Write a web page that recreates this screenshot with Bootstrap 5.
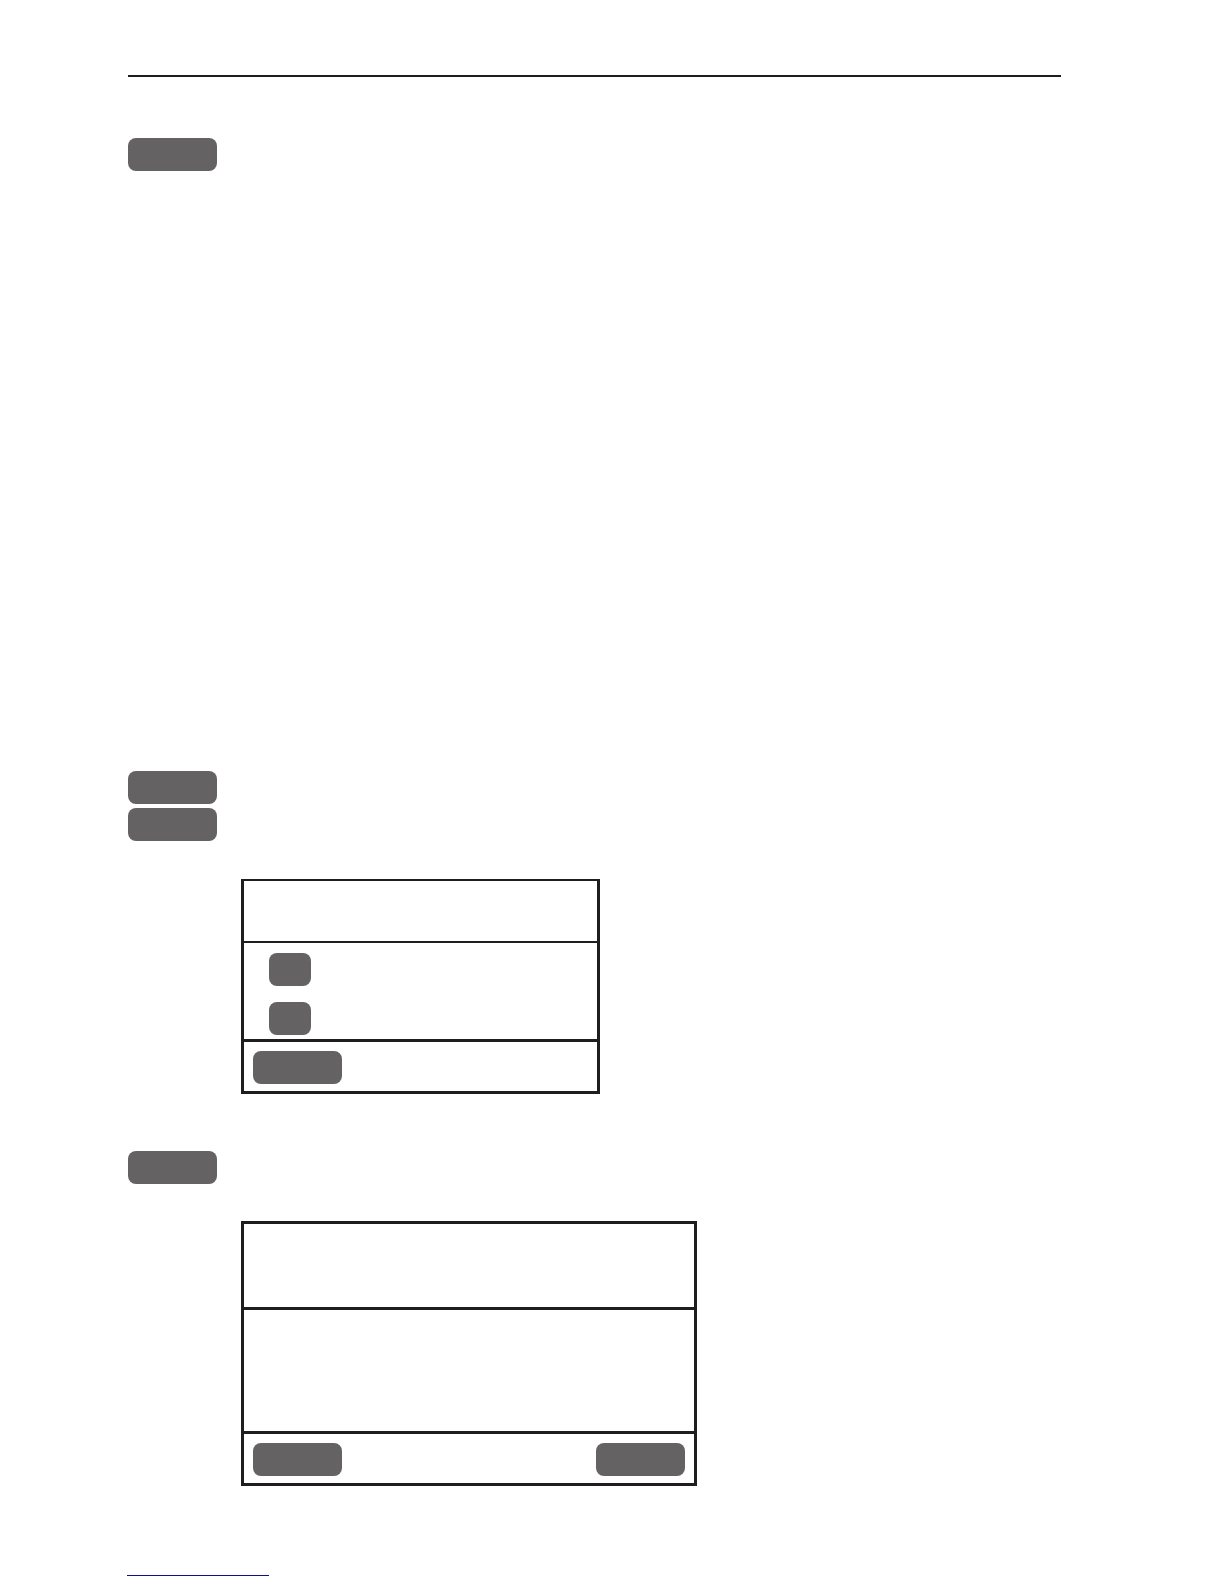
<!DOCTYPE html>
<html lang="en">
<head>
<meta charset="utf-8">
<meta name="viewport" content="width=device-width, initial-scale=1">
<title>Key reference</title>
<link href="https://cdn.jsdelivr.net/npm/bootstrap@5.3.0/dist/css/bootstrap.min.css" rel="stylesheet">
<style>
body { background: #fff; font-family: "Liberation Sans", sans-serif; }
.sheet { padding: 75px 163px 8px 127px; }
.sheet-body { padding-left: 1px; }
.top-rule { border-top: 2px solid #1f1d1e; opacity: 1; margin: 0 0 61px; }
.key { width: 89px; height: 33px; padding: 0; border: 0; border-radius: 8px; background: #656263; }
.key:hover { background: #565354; }
.key-small { width: 42px; }
.section-keys { margin-top: 600px; gap: 4px; }
.section-next { margin-top: 57px; }
.dialog-box { margin: 37px 0 0 113px; border: 3px solid #1f1d1e; max-width: 456px; }
.dialog-thin { margin-top: 38px; border-top-width: 2px; max-width: 359px; }
.dialog-head { min-height: 86px; border-bottom: 3px solid #1f1d1e; }
.dialog-thin .dialog-head { min-height: 62px; border-bottom-width: 2px; }
.dialog-main { min-height: 121px; }
.dialog-choices { padding: 10px 25px 4px; gap: 16px; }
.dialog-foot { padding: 9px 9px 7px; border-top: 3px solid #1f1d1e; }
.foot-link { width: 142px; height: 1px; margin-top: 89px; background: #10108c; }
</style>
<script src="https://cdn.jsdelivr.net/npm/bootstrap@5.3.0/dist/js/bootstrap.bundle.min.js" defer></script>
</head>
<body>
<div class="sheet">
  <main class="sheet-body">
    <hr class="top-rule">
    <section class="d-flex">
      <button type="button" class="btn key" aria-label="Key"></button>
    </section>

    <section>
      <div class="section-keys d-flex flex-column align-items-start">
        <button type="button" class="btn key" aria-label="First key"></button>
        <button type="button" class="btn key" aria-label="Second key"></button>
      </div>
      <div class="dialog-box dialog-thin">
        <div class="dialog-head"></div>
        <div class="dialog-choices d-flex flex-column align-items-start">
          <button type="button" class="btn key key-small" aria-label="Option one"></button>
          <button type="button" class="btn key key-small" aria-label="Option two"></button>
        </div>
        <div class="dialog-foot d-flex">
          <button type="button" class="btn key" aria-label="Dialog key"></button>
        </div>
      </div>
    </section>

    <section class="section-next">
      <div class="d-flex">
        <button type="button" class="btn key" aria-label="Next key"></button>
      </div>
      <div class="dialog-box">
        <div class="dialog-head"></div>
        <div class="dialog-main"></div>
        <div class="dialog-foot d-flex justify-content-between">
          <button type="button" class="btn key" aria-label="Left key"></button>
          <button type="button" class="btn key" aria-label="Right key"></button>
        </div>
      </div>
    </section>
  </main>

  <footer class="d-flex">
    <a class="foot-link d-block" href="#" aria-label="Back to top"></a>
  </footer>
</div>
</body>
</html>
